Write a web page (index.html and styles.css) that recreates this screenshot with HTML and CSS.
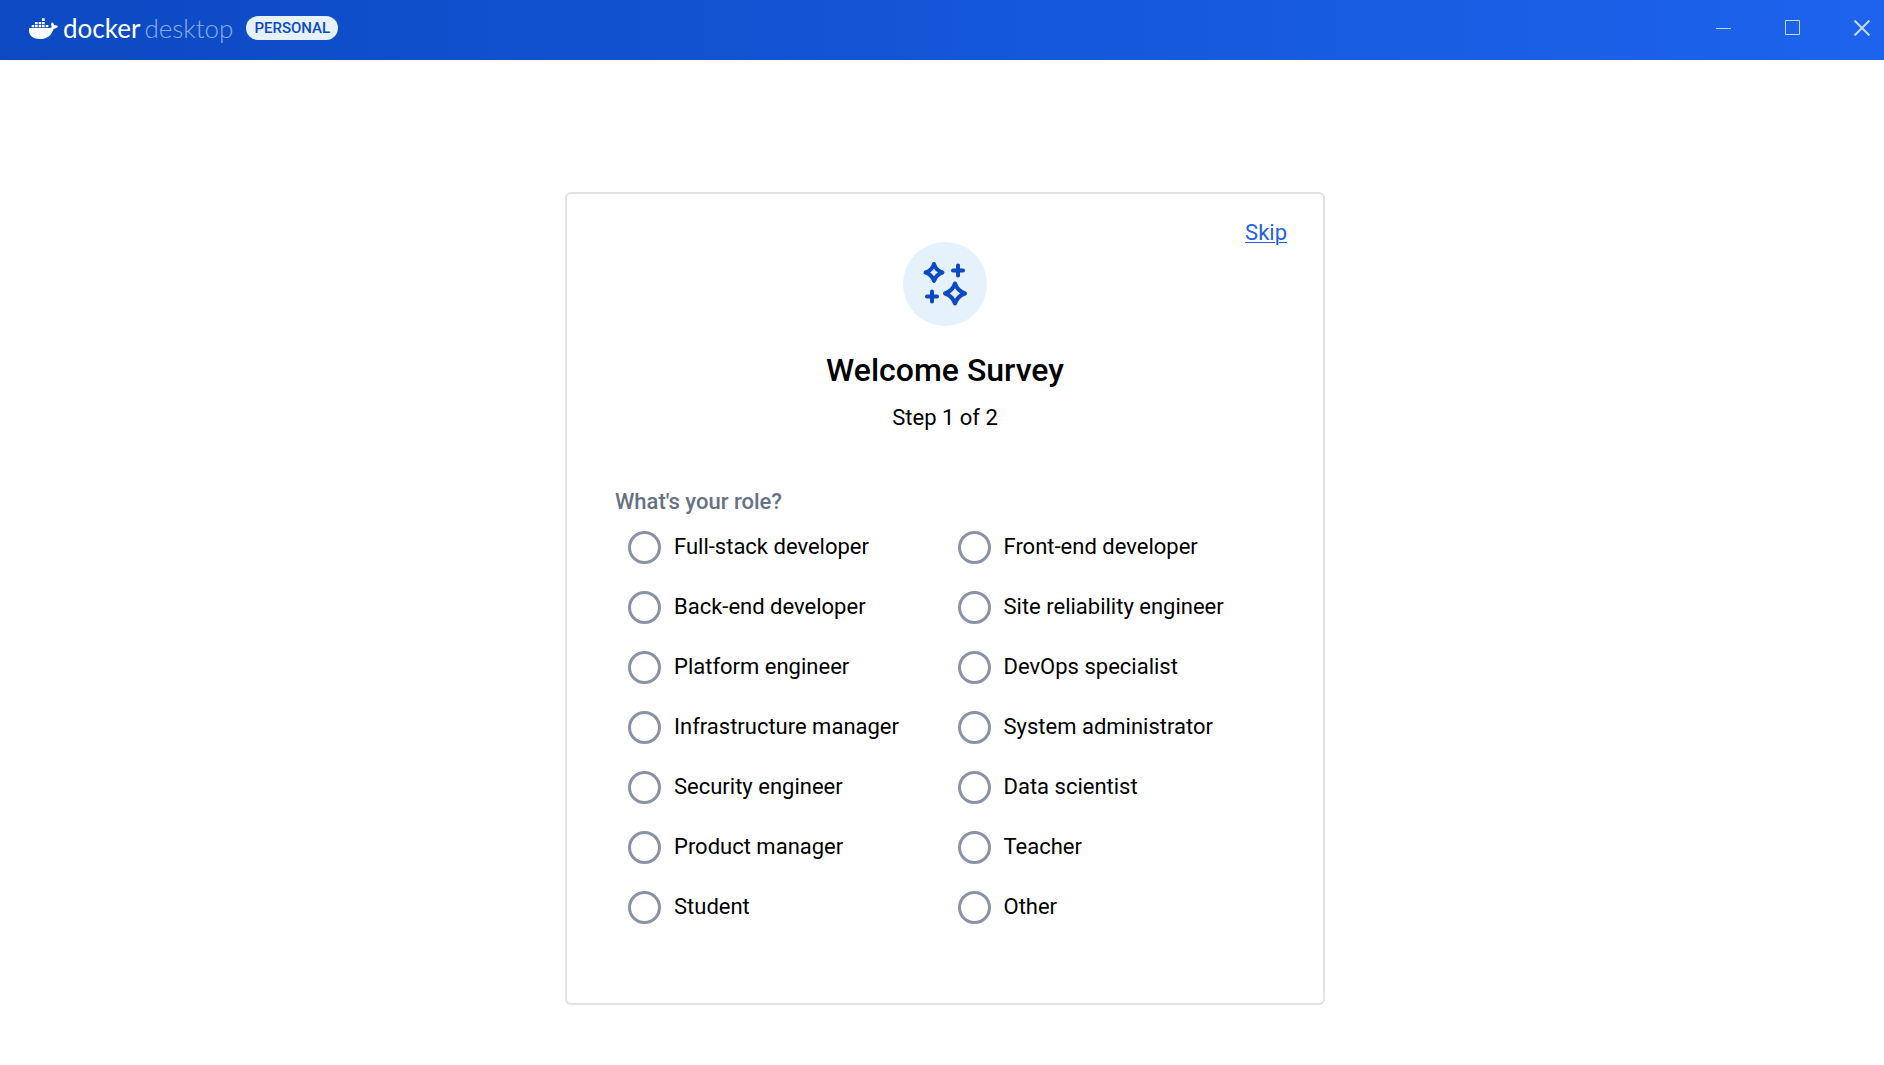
FILE: index.html
```html
<!DOCTYPE html>
<html lang="en">
<head>
    <meta charset="UTF-8">
    <meta name="viewport" content="width=device-width, initial-scale=1.0">
    <title>Docker Desktop</title>
    <link rel="stylesheet" href="styles.css">
</head>
<body>

<header class="titlebar">
    <div class="brand">
        <svg class="whale" viewBox="0 0 87 63" aria-hidden="true">
            <path d="M39 1h8v8h-8zM18 12h8v7h-8zM29 12h8v7h-8zM39 12h8v7h-8zM8 21h8v7H8zM18 21h8v7h-8zM29 21h8v7h-8zM39 21h8v7h-8zM50 21h8v7h-8z"/>
            <path d="M2 30H60C64 30 67 29 69 27C65 22 65 17 69 13C73 15 75 18 76 22C80 21 84 22 87 24C85 30 80 32 74 32C68 52 54 63 32 63C10 63-2 52 0 32Q0 30 2 30Z"/>
        </svg>
        <span class="brand-docker">docker</span>
        <span class="brand-desktop">desktop</span>
        <span class="badge">PERSONAL</span>
    </div>
    <div class="window-controls">
        <button type="button" aria-label="Minimize">
            <svg viewBox="0 0 16 16"><path d="M0 8.5h15"/></svg>
        </button>
        <button type="button" aria-label="Maximize">
            <svg viewBox="0 0 16 16"><path d="M.5 .5h14v14H.5z"/></svg>
        </button>
        <button type="button" aria-label="Close">
            <svg viewBox="0 0 16 16"><path d="M.5 .5l15 15M15.5 .5l-15 15"/></svg>
        </button>
    </div>
</header>

<main>
    <form class="card">
        <div class="skip"><a href="#">Skip</a></div>

        <svg class="sparkles" viewBox="0 0 84 84" aria-hidden="true">
            <circle cx="42" cy="42" r="42"/>
            <path d="M31 22Q33 28.500 39.500 30.500Q33 32.500 31 39Q29 32.500 22.500 30.500Q29 28.500 31 22Z"/>
            <path d="M52 41.500Q54.500 49 62 51.500Q54.500 54 52 61.500Q49.500 54 42 51.500Q49.500 49 52 41.500Z"/>
            <path d="M55 23.500v10M50 28.500h10M29 49.500v10M24 54.500h10"/>
        </svg>

        <h1>Welcome Survey</h1>
        <p class="step">Step 1 of 2</p>

        <fieldset>
            <legend>What's your role?</legend>
            <div class="roles">
                <label><input type="radio" name="role" value="full-stack">Full-stack developer</label>
                <label><input type="radio" name="role" value="front-end">Front-end developer</label>
                <label><input type="radio" name="role" value="back-end">Back-end developer</label>
                <label><input type="radio" name="role" value="sre">Site reliability engineer</label>
                <label><input type="radio" name="role" value="platform">Platform engineer</label>
                <label><input type="radio" name="role" value="devops">DevOps specialist</label>
                <label><input type="radio" name="role" value="infrastructure">Infrastructure manager</label>
                <label><input type="radio" name="role" value="sysadmin">System administrator</label>
                <label><input type="radio" name="role" value="security">Security engineer</label>
                <label><input type="radio" name="role" value="data">Data scientist</label>
                <label><input type="radio" name="role" value="product">Product manager</label>
                <label><input type="radio" name="role" value="teacher">Teacher</label>
                <label><input type="radio" name="role" value="student">Student</label>
                <label><input type="radio" name="role" value="other">Other</label>
            </div>
        </fieldset>
    </form>
</main>

</body>
</html>
```

FILE: styles.css
```css
* {
    box-sizing: border-box;
}

body {
    margin: 0;
    font-family: Roboto, sans-serif;
    font-size: 22px;
    line-height: 28px;
    color: #000;
    background-color: #fff;
}

.titlebar {
    display: flex;
    align-items: center;
    justify-content: space-between;
    height: 60px;
    padding: 0 14px 4px 29px;
    background: linear-gradient(90deg, #0c49c2, #1d63ed);
}

.brand {
    display: flex;
    align-items: center;
    color: #fff;
}

.whale {
    width: 29px;
    height: 21px;
    margin-right: 5px;
    fill: #fff;
}

.brand-docker,
.brand-desktop {
    font-family: Lato, sans-serif;
    font-size: 26px;
}

.brand-docker {
    margin-right: 4px;
}

.brand-desktop {
    font-weight: 300;
    color: #8eadeb;
}

.badge {
    margin-left: 13px;
    padding: 0 8px;
    border-radius: 12px;
    font-size: 15px;
    font-weight: 500;
    line-height: 24px;
    color: #0c49c2;
    background-color: #e5f2fc;
}

.window-controls {
    display: flex;
    gap: 53px;
}

.window-controls button {
    display: flex;
    padding: 0;
    border: none;
    background: none;
    cursor: pointer;
}

.window-controls svg {
    width: 16px;
    height: 16px;
    fill: none;
    stroke: #c6d8fa;
}

.window-controls button:last-child svg {
    stroke-width: 2;
}

main {
    padding: 132px 0 60px 6px;
}

.card {
    display: flex;
    flex-direction: column;
    align-items: center;
    max-width: 760px;
    margin: 0 auto;
    padding: 30px 36px 66px;
    border: 2px solid #e1e2e6;
    border-radius: 6px;
}

.skip {
    align-self: flex-end;
    line-height: 18px;
}

.skip a {
    color: #2560e8;
    text-decoration-thickness: 1px;
    text-underline-offset: 2px;
}

.sparkles {
    width: 84px;
    height: 84px;
    fill: none;
    stroke: #0c49c2;
    stroke-width: 4;
    stroke-linecap: round;
    stroke-linejoin: round;
}

.sparkles circle {
    fill: #e5f2fc;
    stroke: none;
}

h1 {
    margin: 24px 0 14px;
    font-size: 32px;
    font-weight: 500;
    line-height: 40px;
}

.step {
    margin: 0 0 56px;
}

fieldset {
    width: 100%;
    margin: 0;
    padding: 0 0 0 12px;
    border: none;
}

legend {
    padding: 0 0 1px;
    font-weight: 500;
    color: #677285;
}

.roles {
    display: grid;
    grid-template-columns: 1fr 1fr;
    margin-left: 13px;
}

.roles label {
    display: flex;
    align-items: center;
    gap: 13px;
    height: 60px;
}

.roles input {
    appearance: none;
    width: 33px;
    height: 33px;
    margin: 0;
    border: 3px solid #8993a5;
    border-radius: 50%;
}

.roles input:checked {
    border: 10px solid #1d63ed;
}
```
